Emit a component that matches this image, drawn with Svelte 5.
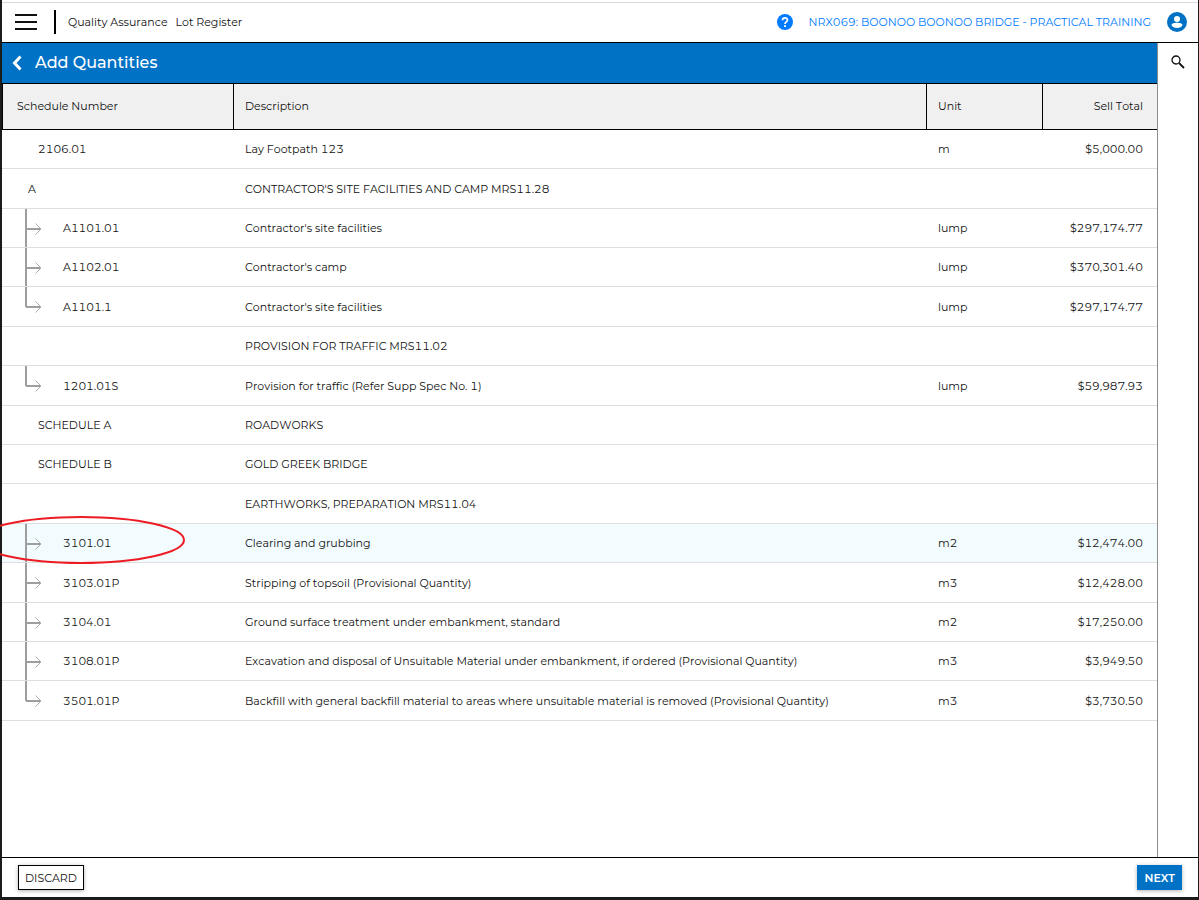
<script lang="ts">
    type Row = {
        code: string;
        description: string;
        unit?: string;
        total?: string;
        kind: "item" | "section" | "child" | "last";
        selected?: boolean;
    };

    const rows: Row[] = [
        { code: "2106.01", description: "Lay Footpath 123", unit: "m", total: "$5,000.00", kind: "item" },
        { code: "A", description: "CONTRACTOR'S SITE FACILITIES AND CAMP MRS11.28", kind: "section" },
        { code: "A1101.01", description: "Contractor's site facilities", unit: "lump", total: "$297,174.77", kind: "child" },
        { code: "A1102.01", description: "Contractor's camp", unit: "lump", total: "$370,301.40", kind: "child" },
        { code: "A1101.1", description: "Contractor's site facilities", unit: "lump", total: "$297,174.77", kind: "last" },
        { code: "", description: "PROVISION FOR TRAFFIC MRS11.02", kind: "section" },
        { code: "1201.01S", description: "Provision for traffic (Refer Supp Spec No. 1)", unit: "lump", total: "$59,987.93", kind: "last" },
        { code: "SCHEDULE A", description: "ROADWORKS", kind: "item" },
        { code: "SCHEDULE B", description: "GOLD GREEK BRIDGE", kind: "item" },
        { code: "", description: "EARTHWORKS, PREPARATION MRS11.04", kind: "section" },
        { code: "3101.01", description: "Clearing and grubbing", unit: "m2", total: "$12,474.00", kind: "child", selected: true },
        { code: "3103.01P", description: "Stripping of topsoil (Provisional Quantity)", unit: "m3", total: "$12,428.00", kind: "child" },
        { code: "3104.01", description: "Ground surface treatment under embankment, standard", unit: "m2", total: "$17,250.00", kind: "child" },
        { code: "3108.01P", description: "Excavation and disposal of Unsuitable Material under embankment, if ordered (Provisional Quantity)", unit: "m3", total: "$3,949.50", kind: "child" },
        { code: "3501.01P", description: "Backfill with general backfill material to areas where unsuitable material is removed (Provisional Quantity)", unit: "m3", total: "$3,730.50", kind: "last" },
    ];

    let selected = $state(rows.findIndex((r) => r.selected));
</script>

<div class="app">
    <header class="topbar">
        <button class="icon" aria-label="Menu">
            <svg width="22" height="16" viewBox="0 0 22 16">
                <path d="M0 1h22M0 8h22M0 15h22" stroke="#111" stroke-width="2" />
            </svg>
        </button>
        <nav class="crumbs">
            <a href="#qa">Quality Assurance</a>
            <a href="#lots">Lot Register</a>
        </nav>
        <button class="icon" aria-label="Help">
            <svg width="16" height="16" viewBox="0 0 16 16" fill="none">
                <circle cx="8" cy="8" r="8" fill="#007bff" />
                <path
                    d="M5.500 6.300C5.500 3.200 10.500 3.200 10.500 6.100C10.500 7.900 8 7.900 8 10"
                    stroke="#fff"
                    stroke-width="1.700"
                />
                <path d="M7 11.200h2v1.900H7z" fill="#fff" />
            </svg>
        </button>
        <a class="project" href="#project">NRX069: BOONOO BOONOO BRIDGE - PRACTICAL TRAINING</a>
        <button class="icon" aria-label="Account">
            <svg width="20" height="20" viewBox="0 0 20 20">
                <circle cx="10" cy="10" r="10" fill="#0072c6" />
                <circle cx="10" cy="7" r="3" fill="#fff" />
                <path d="M4.500 13c0-3 11-3 11 0-1 4-10 4-11 0z" fill="#fff" />
            </svg>
        </button>
    </header>

    <div class="body">
        <main>
            <div class="title">
                <button class="icon" aria-label="Back">
                    <svg width="10" height="16" viewBox="0 0 10 16">
                        <path d="M8.500 1.500L2.500 8l6 6.500" fill="none" stroke="#fff" stroke-width="3" />
                    </svg>
                </button>
                <h1>Add Quantities</h1>
            </div>

            <table>
                <thead>
                    <tr>
                        <th class="code">Schedule Number</th>
                        <th>Description</th>
                        <th class="unit">Unit</th>
                        <th class="total">Sell Total</th>
                    </tr>
                </thead>
                <tbody>
                    {#each rows as row, i}
                        <tr class:selected={i === selected} onclick={() => (selected = i)}>
                            <td class="code {row.kind}">
                                <div class="node">
                                    {#if row.kind === "child" || row.kind === "last"}
                                        <svg class="arrow" width="16" height="12" viewBox="0 0 16 12">
                                            <path d="M0 6h15" stroke="#9e9e9e" stroke-width="2" />
                                            <path d="M9.500 0.500L15 6l-5.500 5.500" fill="none" stroke="#ababab" />
                                        </svg>
                                    {/if}
                                    <span>{row.code}</span>
                                </div>
                                {#if row.selected}
                                    <svg class="mark" width="208" height="50" viewBox="0 0 208 50">
                                        <ellipse cx="104" cy="25" rx="103" ry="23" fill="none" stroke="#ed1c24" stroke-width="2" />
                                    </svg>
                                {/if}
                            </td>
                            <td>{row.description}</td>
                            <td>{row.unit ?? ""}</td>
                            <td class="total">{row.total ?? ""}</td>
                        </tr>
                    {/each}
                </tbody>
            </table>
        </main>

        <aside>
            <button class="icon" aria-label="Search">
                <svg width="14" height="14" viewBox="0 0 14 14" fill="none" stroke="#111">
                    <circle cx="5" cy="5" r="4" stroke-width="1.300" />
                    <path d="M8 8l5 5" stroke-width="1.800" />
                </svg>
            </button>
        </aside>
    </div>

    <footer>
        <button class="discard">DISCARD</button>
        <button class="next">NEXT</button>
    </footer>
</div>

<style>
    :global(body) {
        background: #1b1b1b;
    }

    .app {
        display: flex;
        flex-direction: column;
        box-sizing: border-box;
        min-height: 100vh;
        border: solid #1b1b1b;
        border-width: 0 1px 3px 2px;
        background: #fff;
        color: #111;
        font-family: Montserrat, Inter, sans-serif;
        font-size: 11px;
        font-kerning: none;
        font-variant-numeric: tabular-nums;
        line-height: 16px;
    }

    button {
        font: inherit;
        cursor: pointer;
    }

    a {
        color: inherit;
        text-decoration: none;
    }

    svg {
        display: block;
    }

    .icon {
        padding: 0;
        border: 0;
        background: none;
    }

    .topbar {
        display: flex;
        align-items: center;
        box-sizing: border-box;
        height: 41px;
        margin-top: 2px;
        padding: 0 11px 1px 13px;
        border-top: 1px solid #d9d9dc;
        border-bottom: 1px solid #000;
    }

    .crumbs {
        display: flex;
        flex: 1;
        align-items: center;
        gap: 8px;
        height: 24px;
        margin-left: 17px;
        padding-left: 12px;
        border-left: 2px solid #000;
    }

    .project {
        margin: 0 16px;
        color: #007bff;
    }

    .body {
        display: flex;
        flex: 1;
    }

    main {
        flex: 1;
    }

    aside {
        display: flex;
        justify-content: center;
        align-items: flex-start;
        box-sizing: border-box;
        width: 41px;
        padding-top: 12px;
        border-left: 1px solid #8c8c8c;
    }

    .title {
        display: flex;
        align-items: center;
        gap: 13px;
        height: 40px;
        padding-left: 10px;
        background: #0072c6;
        color: #fff;
    }

    h1 {
        margin: 0;
        font-size: 16px;
        font-weight: 500;
        font-kerning: auto;
    }

    table {
        width: 100%;
        table-layout: fixed;
        border-spacing: 0;
    }

    th,
    td {
        box-sizing: border-box;
    }

    th {
        height: 47px;
        padding: 0 11px 2px;
        border: solid #000;
        border-width: 1px 1px 1px 0;
        background: #f0f0f0;
        font-weight: 400;
        text-align: left;
    }

    th.code {
        width: 232px;
        padding-left: 14px;
        border-left-width: 1px;
    }

    th.unit {
        width: 116px;
    }

    th.total {
        width: 114px;
        border-right: 0;
    }

    td {
        height: 39px;
        padding: 0 11px;
        border-bottom: 1px solid #dedede;
    }

    /* keeps the average row a little over 39px */
    tr:nth-child(5n) td,
    tr:nth-child(5n + 2) td {
        height: 40px;
    }

    .total {
        padding-right: 14px;
        text-align: right;
    }

    td.code {
        position: relative;
        padding: 0 0 0 36px;
    }

    td.section {
        padding-left: 26px;
    }

    td.child,
    td.last {
        padding-left: 24px;
        background: linear-gradient(#9e9e9e, #9e9e9e) no-repeat 23px 0 / 2px 100%;
    }

    td.last {
        background-size: 2px 20px;
    }

    .node {
        display: flex;
        align-items: center;
    }

    .arrow {
        margin: 1px 21px 0 0;
    }

    .selected {
        background: #f2fbfe;
    }

    .mark {
        position: absolute;
        top: -9px;
        left: -25px;
        pointer-events: none;
    }

    footer {
        display: flex;
        justify-content: space-between;
        align-items: center;
        height: 39px;
        padding: 0 16px;
        border-top: 1px solid #000;
    }

    footer button {
        height: 25px;
        padding: 0 6px;
        border: 1px solid #000;
        background: #fff;
        color: #111;
        box-shadow: 0 1px 4px rgba(0, 0, 0, 0.3);
    }

    footer .next {
        border-color: #0072c6;
        background: #0072c6;
        color: #fff;
        font-weight: 600;
    }
</style>
